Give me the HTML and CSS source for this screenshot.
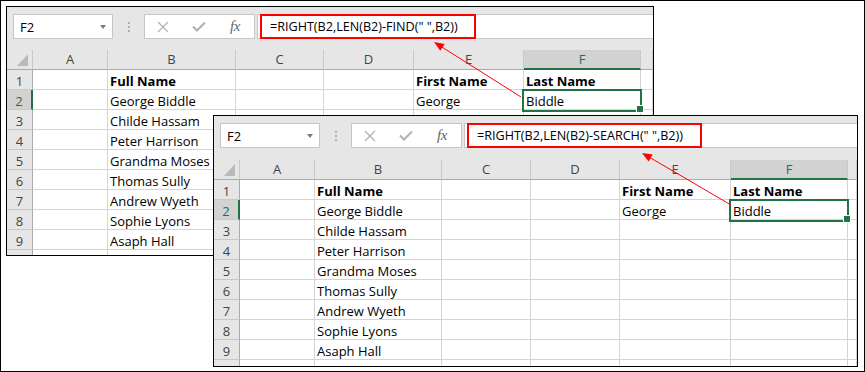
FILE: index.html
```html
<!DOCTYPE html>
<html>
<head>
    <title>RIGHT formula - FIND vs SEARCH</title>
    <link rel="stylesheet" href="styles.css">
</head>
<body>
<div class="frame">

    <!-- first window: FIND -->
    <div class="sheet sheet-find">
        <div class="toolbar">
            <div class="namebox"><span>F2</span><span class="caret"></span></div>
            <div class="grip"><i></i><i></i><i></i></div>
            <div class="fxbox">
                <svg width="12" height="12" viewBox="0 0 12 12"><path d="M1 1L11 11M11 1L1 11" stroke="#b4b4b4" stroke-width="1.4" fill="none"/></svg>
                <svg width="14" height="11" viewBox="0 0 14 11"><path d="M1 5.5L5 9.5L13 1.5" stroke="#b4b4b4" stroke-width="2.2" fill="none"/></svg>
                <span class="fx">fx</span>
            </div>
            <div class="formula"><span class="formula-text find">=RIGHT(B2,LEN(B2)-FIND(" ",B2))</span></div>
        </div>
        <div class="grid">
            <div class="hd corner"><span class="tri"></span></div><div class="hd">A</div><div class="hd">B</div><div class="hd">C</div><div class="hd">D</div><div class="hd">E</div><div class="hd sel">F</div><div class="hd"></div>
            <div class="rh">1</div><div></div><div class="b">Full Name</div><div></div><div></div><div class="b">First Name</div><div class="b">Last Name</div><div></div>
            <div class="rh sel">2</div><div></div><div>George Biddle</div><div></div><div></div><div>George</div><div class="active">Biddle</div><div></div>
            <div class="rh">3</div><div></div><div>Childe Hassam</div><div></div><div></div><div></div><div></div><div></div>
            <div class="rh">4</div><div></div><div>Peter Harrison</div><div></div><div></div><div></div><div></div><div></div>
            <div class="rh">5</div><div></div><div>Grandma Moses</div><div></div><div></div><div></div><div></div><div></div>
            <div class="rh">6</div><div></div><div>Thomas Sully</div><div></div><div></div><div></div><div></div><div></div>
            <div class="rh">7</div><div></div><div>Andrew Wyeth</div><div></div><div></div><div></div><div></div><div></div>
            <div class="rh">8</div><div></div><div>Sophie Lyons</div><div></div><div></div><div></div><div></div><div></div>
            <div class="rh">9</div><div></div><div>Asaph Hall</div><div></div><div></div><div></div><div></div><div></div>
            <div class="rh"></div><div></div><div></div><div></div><div></div><div></div><div></div><div></div>
        </div>
    </div>

    <!-- second window: SEARCH -->
    <div class="sheet sheet-search">
        <div class="toolbar">
            <div class="namebox"><span>F2</span><span class="caret"></span></div>
            <div class="grip"><i></i><i></i><i></i></div>
            <div class="fxbox">
                <svg width="12" height="12" viewBox="0 0 12 12"><path d="M1 1L11 11M11 1L1 11" stroke="#b4b4b4" stroke-width="1.4" fill="none"/></svg>
                <svg width="14" height="11" viewBox="0 0 14 11"><path d="M1 5.5L5 9.5L13 1.5" stroke="#b4b4b4" stroke-width="2.2" fill="none"/></svg>
                <span class="fx">fx</span>
            </div>
            <div class="formula"><span class="formula-text search">=RIGHT(B2,LEN(B2)-SEARCH(" ",B2))</span></div>
        </div>
        <div class="grid">
            <div class="hd corner"><span class="tri"></span></div><div class="hd">A</div><div class="hd">B</div><div class="hd">C</div><div class="hd">D</div><div class="hd">E</div><div class="hd sel">F</div><div class="hd"></div>
            <div class="rh">1</div><div></div><div class="b">Full Name</div><div></div><div></div><div class="b">First Name</div><div class="b">Last Name</div><div></div>
            <div class="rh sel">2</div><div></div><div>George Biddle</div><div></div><div></div><div>George</div><div class="active">Biddle</div><div></div>
            <div class="rh">3</div><div></div><div>Childe Hassam</div><div></div><div></div><div></div><div></div><div></div>
            <div class="rh">4</div><div></div><div>Peter Harrison</div><div></div><div></div><div></div><div></div><div></div>
            <div class="rh">5</div><div></div><div>Grandma Moses</div><div></div><div></div><div></div><div></div><div></div>
            <div class="rh">6</div><div></div><div>Thomas Sully</div><div></div><div></div><div></div><div></div><div></div>
            <div class="rh">7</div><div></div><div>Andrew Wyeth</div><div></div><div></div><div></div><div></div><div></div>
            <div class="rh">8</div><div></div><div>Sophie Lyons</div><div></div><div></div><div></div><div></div><div></div>
            <div class="rh">9</div><div></div><div>Asaph Hall</div><div></div><div></div><div></div><div></div><div></div>
            <div class="rh"></div><div></div><div></div><div></div><div></div><div></div><div></div><div></div>
        </div>
    </div>

    <!-- red arrows from F2 to the formula -->
    <svg class="arrows" width="865" height="372" viewBox="0 0 865 372">
        <line x1="521" y1="97" x2="441" y2="46.5" stroke="#f00" stroke-width="1"/>
        <polygon points="434,42 444.6,43.9 440.3,50.7" fill="#f00"/>
        <line x1="731" y1="205" x2="649" y2="157" stroke="#f00" stroke-width="1"/>
        <polygon points="642,153 652.7,154.6 648.6,161.5" fill="#f00"/>
    </svg>
</div>
</body>
</html>
```

FILE: styles.css
```css
* {
    box-sizing: border-box;
}

body {
    margin: 0;
    background-color: #fff;
    font-family: "Open Sans", "Liberation Sans", sans-serif;
    font-size: 13px;
    color: #000;
}

.frame {
    position: relative;
    width: 865px;
    height: 372px;
    border: 1px solid #000;
    overflow: hidden;
}

/* windows */
.sheet {
    position: absolute;
    border: 1px solid #000;
    background-color: #fff;
    overflow: hidden;
}

.sheet-find {
    left: 5px;
    top: 5px;
    width: 648px;
    height: 250px;
}

.sheet-search {
    left: 212px;
    top: 114px;
    width: 645px;
    height: 252px;
}

/* formula bar */
.toolbar {
    display: flex;
    align-items: flex-start;
    height: 43px;
    padding: 7px 0 0 6px;
    background-color: #e6e6e6;
}

.sheet-search .toolbar {
    height: 44px;
}

.namebox {
    display: flex;
    align-items: center;
    justify-content: space-between;
    width: 100px;
    height: 25px;
    padding: 1px 6px 0 6px;
    background-color: #fff;
    border: 1px solid #c6c6c6;
}

.caret {
    width: 0;
    height: 0;
    border-left: 3.5px solid transparent;
    border-right: 3.5px solid transparent;
    border-top: 4px solid #7a7a7a;
}

.grip {
    display: flex;
    flex-direction: column;
    align-items: center;
    gap: 2px;
    width: 31px;
    padding-top: 8px;
}

.grip i {
    width: 2px;
    height: 2px;
    background-color: #b0b0b0;
}

.fxbox {
    display: grid;
    grid-template-columns: 36px 36px 36px;
    align-items: center;
    justify-items: center;
    width: 111px;
    height: 25px;
    background-color: #fff;
    border: 1px solid #c6c6c6;
}

.fx {
    font-family: "Liberation Serif", serif;
    font-style: italic;
    font-size: 15px;
    color: #666;
    letter-spacing: -0.5px;
}

.formula {
    flex: 1;
    height: 25px;
    margin-left: 2px;
    padding-left: 2px;
    background-color: #fff;
    border-top: 1px solid #c6c6c6;
    border-bottom: 1px solid #c6c6c6;
    border-left: 1px solid #c6c6c6;
}

.formula-text {
    display: block;
    height: 25px;
    margin-top: -1px;
    padding: 1px 0 0 8px;
    border: 2px solid #f00;
    font-size: 12.6px;
    line-height: 20px;
    white-space: nowrap;
    overflow: hidden;
}

.formula-text.find {
    width: 216px;
}

.formula-text.search {
    width: 235px;
}

/* cells */
.grid {
    display: grid;
    grid-auto-rows: 20px;
}

.sheet-find .grid {
    grid-template-columns: 26px 75px 128px 88px 90px 110px 117px 1fr;
}

.sheet-search .grid {
    grid-template-columns: 26px 75px 127px 89px 89px 111px 117px 1fr;
}

.grid > div {
    padding: 2px 2px 0 2px;
    line-height: 19px;
    white-space: nowrap;
    overflow: hidden;
    border-right: 1px solid #d4d4d4;
    border-bottom: 1px solid #d4d4d4;
}

.grid .b {
    font-weight: bold;
}

.grid .hd {
    padding-top: 0;
    background-color: #e6e6e6;
    color: #444;
    text-align: center;
    line-height: 19px;
    border-right-color: #c8c8c8;
    border-bottom-color: #ababab;
}

.grid .rh {
    background-color: #e6e6e6;
    color: #444;
    text-align: center;
    border-right-color: #ababab;
    border-bottom-color: #c8c8c8;
}

.grid .corner {
    position: relative;
}

.tri {
    position: absolute;
    right: 4px;
    bottom: 3px;
    width: 0;
    height: 0;
    border-left: 11px solid transparent;
    border-bottom: 12px solid #b9b9b9;
}

.grid .hd.sel {
    background-color: #d2d2d2;
    color: #217346;
    border-bottom: 2px solid #217346;
}

.grid .rh.sel {
    background-color: #d2d2d2;
    color: #217346;
    border-right: 2px solid #217346;
}

.grid > .active {
    position: relative;
    overflow: visible;
    z-index: 1;
}

.active::after {
    content: "";
    position: absolute;
    top: -1px;
    left: -2px;
    right: -2px;
    bottom: -3px;
    border: 2px solid #217346;
}

.active::before {
    content: "";
    position: absolute;
    right: -4px;
    bottom: -4px;
    width: 6px;
    height: 6px;
    background-color: #217346;
    border: 1px solid #fff;
    z-index: 2;
}

.arrows {
    position: absolute;
    left: -1px;
    top: -1px;
    z-index: 5;
}
```
